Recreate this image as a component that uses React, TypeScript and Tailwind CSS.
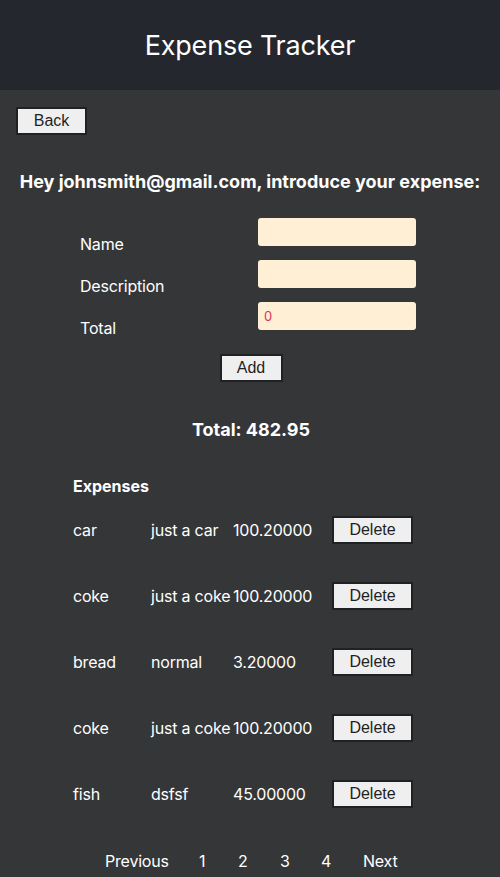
import React from "react";

const expenses = [
  { name: "car", desc: "just a car", total: "100.20000" },
  { name: "coke", desc: "just a coke", total: "100.20000" },
  { name: "bread", desc: "normal", total: "3.20000" },
  { name: "coke", desc: "just a coke", total: "100.20000" },
  { name: "fish", desc: "dsfsf", total: "45.00000" },
];

const btn =
  "bg-[#efefef] text-[#1f1f1f] border-2 border-[#202124] text-[16px] leading-none font-['Liberation_Sans',Arial,sans-serif] flex items-center justify-center";

export default function App() {
  return (
    <div className="w-[500px] h-[877px] overflow-hidden bg-[#353638] text-white font-['Inter',sans-serif]">
      <header className="h-[90px] bg-[#25272f] flex items-center justify-center">
        <h1 className="text-[27px] leading-none font-normal tracking-[-0.2px]">Expense Tracker</h1>
      </header>

      <div className="pl-4 pt-[17px]">
        <button className={`${btn} w-[71px] h-[28px]`}>Back</button>
      </div>

      <h2 className="mt-[36px] text-center text-[18px] font-bold leading-[22px]">
        Hey johnsmith@gmail.com, introduce your expense:
      </h2>

      <div className="mt-[25px] flex flex-col gap-[14px]">
        {["Name", "Description", "Total"].map((l) => (
          <div key={l} className="flex h-[28px]">
            <div className="w-[258px] pl-[80px] pt-[16px] text-[16px] leading-[20px] tracking-[-0.2px]">{l}</div>
            <input
              className="w-[158px] h-[28px] rounded-[3px] bg-[#ffefd5] px-[6px] text-[13px] text-[#333] placeholder:text-[#d6335a] outline-none"
              placeholder={l === "Total" ? "0" : ""}
            />
          </div>
        ))}
      </div>

      <div className="mt-[24px] flex justify-center pl-[2px]">
        <button className={`${btn} w-[63px] h-[28px]`}>Add</button>
      </div>

      <div className="mt-[37px] text-center text-[18px] font-bold leading-[22px] pl-[2px]">
        Total: 482.95
      </div>

      <div className="mt-[35px] pl-[73px] text-[16px] font-bold leading-[20px]">Expenses</div>

      <div className="mt-[1px] pl-[73px]">
        {expenses.map((e, i) => (
          <div key={i} className="grid grid-cols-[78px_82px_99px_80px] items-center h-[66px] text-[16px] tracking-[-0.2px]">
            <span>{e.name}</span>
            <span className="whitespace-nowrap">{e.desc}</span>
            <span>{e.total}</span>
            <button className={`${btn} w-[81px] h-[28px] tracking-normal`}>Delete</button>
          </div>
        ))}
      </div>

      <div className="mt-[24px] flex pl-[105px] text-[16px] leading-[20px] tracking-[-0.2px]">
        <span className="w-[94px]">Previous</span>
        <span className="w-[39px]">1</span>
        <span className="w-[42px]">2</span>
        <span className="w-[41px]">3</span>
        <span className="w-[42px]">4</span>
        <span>Next</span>
      </div>
    </div>
  );
}
